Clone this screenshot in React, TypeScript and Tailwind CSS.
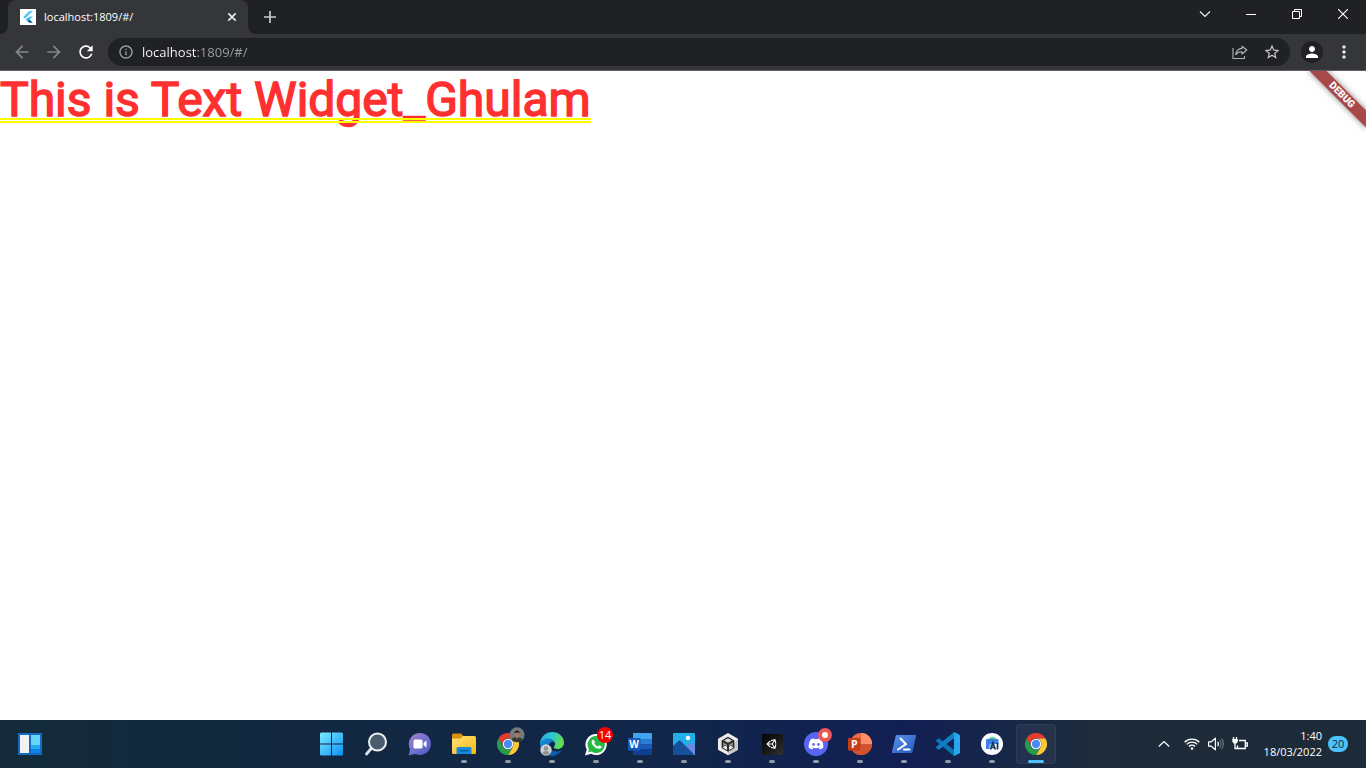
import React, { useState } from "react";
import {
  MdArrowBack,
  MdArrowForward,
  MdInfoOutline,
  MdMoreVert,
  MdPerson,
  MdRefresh,
  MdStarBorder,
} from "react-icons/md";
import { FaDiscord, FaUnity } from "react-icons/fa";

const uiFont = "font-['Segoe_UI','Open_Sans','Noto_Sans',sans-serif]";

function FlutterIcon() {
  return (
    <svg viewBox="0 0 16 16" className="size-4 shrink-0" aria-hidden="true">
      <rect width="16" height="16" fill="#fff" />
      <path d="M9.2 2h3.6L5 9.7 3.2 7.9z" fill="#54c5f8" />
      <path d="M9.2 7.6h3.6L9.6 10.8 7.8 9z" fill="#54c5f8" />
      <path d="M6.2 10.7 8 8.9l4.8 4.9H9.2z" fill="#01579b" />
      <path d="M6.2 10.7 8 8.9l1.8 1.8L8 12.5z" fill="#29b6f6" />
    </svg>
  );
}

function TabStrip() {
  const caption =
    "flex h-7 w-[46px] items-center justify-center text-white hover:bg-white/10";
  return (
    <header className="flex h-[34px] shrink-0 items-start bg-[#202124] pl-2">
      <div className="relative flex h-[34px] w-60 items-center rounded-t-lg bg-[#35363a] pr-2 pl-3">
        <svg viewBox="0 0 8 8" className="absolute bottom-0 -left-2 size-2" aria-hidden="true">
          <path d="M8 0v8H0a8 8 0 0 0 8-8z" fill="#35363a" />
        </svg>
        <svg viewBox="0 0 8 8" className="absolute -right-2 bottom-0 size-2" aria-hidden="true">
          <path d="M0 0v8h8a8 8 0 0 1-8-8z" fill="#35363a" />
        </svg>
        <FlutterIcon />
        <span className="ml-2 flex-1 text-[11px] leading-4 text-white">localhost:1809/#/</span>
        <button type="button" aria-label="Close tab" className="flex size-4 items-center justify-center">
          <svg viewBox="0 0 16 16" className="size-4">
            <path d="m4.3 4.3 7.4 7.4m0-7.4-7.4 7.4" stroke="#e8eaed" strokeWidth="1.7" />
          </svg>
        </button>
      </div>
      <button type="button" aria-label="New tab" className="ml-2 flex h-[34px] w-7 items-center justify-center">
        <svg viewBox="0 0 12 12" className="size-3">
          <path d="M6 0v12M0 6h12" stroke="#c8cacd" strokeWidth="1.7" />
        </svg>
      </button>
      <div className="ml-auto flex">
        <button type="button" aria-label="Search tabs" className={caption}>
          <svg viewBox="0 0 12 12" className="size-3">
            <path d="m1 3.5 5 5 5-5" fill="none" stroke="#f1f3f4" strokeWidth="1.1" />
          </svg>
        </button>
        <button type="button" aria-label="Minimize" className={caption}>
          <svg viewBox="0 0 10 10" className="size-[10px]">
            <path d="M0 5.5h10" stroke="currentColor" />
          </svg>
        </button>
        <button type="button" aria-label="Restore" className={caption}>
          <svg viewBox="0 0 10 10" className="size-[10px]">
            <path d="M.5 2.5h7v7h-7zM2.5 2.5v-2h7v7h-2" fill="none" stroke="currentColor" />
          </svg>
        </button>
        <button type="button" aria-label="Close" className={caption}>
          <svg viewBox="0 0 10 10" className="size-[10px]">
            <path d="m0 0 10 10M10 0 0 10" stroke="currentColor" strokeWidth="1.1" />
          </svg>
        </button>
      </div>
    </header>
  );
}

function Toolbar() {
  const [url, setUrl] = useState("localhost:1809/#/");
  const button = "flex size-7 shrink-0 items-center justify-center";
  return (
    <nav className="flex shrink-0 items-center gap-1 border-b border-[#5f5f63] bg-[#35363a] px-2 py-1">
      <button type="button" aria-label="Back" className={button}>
        <MdArrowBack className="size-5 text-[#85868a]" />
      </button>
      <button type="button" aria-label="Forward" className={button}>
        <MdArrowForward className="size-5 text-[#85868a]" />
      </button>
      <button type="button" aria-label="Reload" className={button}>
        <MdRefresh className="size-5 text-white" />
      </button>
      <div className="mx-1 flex h-7 flex-1 items-center rounded-full bg-[#202124] pr-1 pl-[10px]">
        <MdInfoOutline className="size-4 shrink-0 text-[#9aa0a6]" />
        <input
          aria-label="Address and search bar"
          value={url}
          onChange={(e) => setUrl(e.target.value)}
          className="ml-2 h-5 min-w-0 flex-1 bg-[linear-gradient(to_right,#ffffff_55px,#9aa0a6_55px)] bg-clip-text text-[13px] leading-5 text-transparent caret-white outline-none"
        />
        <button type="button" aria-label="Share" className={button}>
          <svg viewBox="0 0 16 16" className="size-4" fill="none" stroke="#b0b3b8" strokeWidth="1.1">
            <path d="M1 4v10.5h11.5V12" />
            <path d="M10 2.2 14.8 6 10 10V7.8C7.400 7.700 5.400 8.500 3.800 10.600 4.300 7 6.300 4.700 10 4.400z" strokeLinejoin="round" />
          </svg>
        </button>
        <button type="button" aria-label="Bookmark this tab" className="ml-1 flex size-7 items-center justify-center">
          <MdStarBorder className="size-[18px] text-[#c6c8cb]" />
        </button>
      </div>
      <button type="button" aria-label="Profile" className={button}>
        <span className="flex size-[22px] items-center justify-center rounded-full bg-[#202124]">
          <MdPerson className="size-[18px] text-white" />
        </span>
      </button>
      <button type="button" aria-label="Menu" className={button}>
        <MdMoreVert className="size-5 text-[#e8eaed]" />
      </button>
    </nav>
  );
}

function StartIcon() {
  return (
    <svg viewBox="0 0 24 24" className="size-6">
      <defs>
        <linearGradient id="start" x1="0" y1="0" x2="1" y2="1" gradientUnits="objectBoundingBox">
          <stop offset="0" stopColor="#7cecff" />
          <stop offset="1" stopColor="#0a8ff5" />
        </linearGradient>
      </defs>
      <path d="M0 1.500 1 .5h10v11H0zM12 .5h10l1 1v10H12zM0 12.500h11v11H1l-1-1zM12 12.500h11v10l-1 1H12z" fill="url(#start)" />
    </svg>
  );
}

function SearchIcon() {
  return (
    <svg viewBox="0 0 24 24" className="size-6">
      <path d="m2.500 22 6-7" stroke="#dfe3e8" strokeWidth="2.800" strokeLinecap="round" />
      <circle cx="13.500" cy="10" r="8.500" fill="#4a5b6e" stroke="#eceff2" strokeWidth="2" />
    </svg>
  );
}

function ChatIcon() {
  return (
    <svg viewBox="0 0 24 24" className="size-6">
      <defs>
        <linearGradient id="chat" x1="0" y1="0" x2="1" y2="1">
          <stop offset="0" stopColor="#a57cc0" />
          <stop offset=".5" stopColor="#7273cf" />
          <stop offset="1" stopColor="#4b53c4" />
        </linearGradient>
      </defs>
      <path d="M12 1a11 11 0 1 1-4.600 21L.8 23.200l1.300-6A11 11 0 0 1 12 1z" fill="url(#chat)" />
      <rect x="5.500" y="7.500" width="9" height="9" rx="1.500" fill="#fff" />
      <path d="m15.500 11 3-2.600v7.200l-3-2.600z" fill="#fff" />
    </svg>
  );
}

function FolderIcon() {
  return (
    <svg viewBox="0 0 24 24" className="size-6">
      <defs>
        <linearGradient id="folder" x1="0" y1="0" x2="1" y2="1">
          <stop offset="0" stopColor="#ffe17a" />
          <stop offset="1" stopColor="#f9b913" />
        </linearGradient>
      </defs>
      <path d="M0 3a1.500 1.500 0 0 1 1.500-1.500H9L11.500 4H18v5H0z" fill="#d99208" />
      <path d="M0 6.500h8.500L11 4h11.500A1.500 1.500 0 0 1 24 5.500v15a1.500 1.500 0 0 1-1.500 1.500h-21A1.500 1.500 0 0 1 0 20.500z" fill="url(#folder)" />
      <path d="M4.500 22v-5.500A1.500 1.500 0 0 1 6 15h12a1.500 1.500 0 0 1 1.500 1.500V22z" fill="#168adb" />
      <path d="M8 18.700h8" stroke="#075fa8" strokeWidth="1.400" strokeLinecap="round" />
    </svg>
  );
}

function ChromeIcon({ profile = false }: { profile?: boolean }) {
  return (
    <svg viewBox="0 0 24 24" className="size-6 overflow-visible">
      <path d="M2.470 6.500A11 11 0 0 1 21.530 6.500H12a5.500 5.500 0 0 0-4.760 8.250z" fill="#e33b2e" />
      <path d="M21.530 6.500A11 11 0 0 1 12 23l4.760-8.250A5.500 5.500 0 0 0 12 6.500z" fill="#fcc934" />
      <path d="M12 23A11 11 0 0 1 2.470 6.500l4.770 8.250a5.500 5.500 0 0 0 9.520 0z" fill="#269b4b" />
      <circle cx="12" cy="12" r="5.300" fill="#fff" />
      <circle cx="12" cy="12" r="4.200" fill="#4a8af4" />
      {profile && (
        <g>
          <circle cx="21" cy="2.800" r="7.500" fill="#747a7b" />
          <path d="M15.500 7.800c1-2 2.500-2.600 5.500-2.600s4.800.8 5.600 2.600a7.500 7.500 0 0 1-11.100 0z" fill="#343a2c" />
          <ellipse cx="21" cy="2.300" rx="2.300" ry="3" fill="#a67861" />
          <path d="M18.500 1.800c-.3-4.400 5.300-4.400 5 0-.7-1.800-4.300-1.800-5 0z" fill="#19191b" />
          <path d="m20 5 1 2 1-2z" fill="#b98972" />
        </g>
      )}
    </svg>
  );
}

function EdgeIcon() {
  return (
    <svg viewBox="0 0 24 24" className="size-6">
      <defs>
        <linearGradient id="edge-top" x1="0" y1="0" x2="1" y2=".3">
          <stop offset="0" stopColor="#2aa9e8" />
          <stop offset=".5" stopColor="#2cc5d6" />
          <stop offset="1" stopColor="#63dc50" />
        </linearGradient>
        <linearGradient id="edge-base" x1="0" y1="0" x2="1" y2="1">
          <stop offset="0" stopColor="#1595df" />
          <stop offset="1" stopColor="#0b4da2" />
        </linearGradient>
      </defs>
      <path d="M0 12C0 7 4 4.500 9 5c4 .4 6 3 6 5.500-3-2-6 0-6 3.500 0 4 5 7 12.500 4.500-3.500 5.500-9 6.500-13 4.700A12 12 0 0 1 0 12z" fill="url(#edge-base)" />
      <path d="M0 11.500C.5 4.500 6 0 12 0c7 0 12 5 12 10.500 0 4-3 6.500-6.500 6.500-3 0-4.300-1-3.300-2.400C17 10.500 13 6.500 8.500 6.500 4.500 6.500 1 8.500 0 11.500z" fill="url(#edge-top)" />
      <circle cx="6" cy="18" r="5.700" fill="#d0d0d1" />
      <circle cx="6" cy="16.500" r="2.200" fill="#8f9092" />
      <path d="M2.500 21.500c.4-3.300 6.600-3.300 7 0a5.700 5.700 0 0 1-7 0z" fill="#8f9092" />
    </svg>
  );
}

function WhatsAppIcon() {
  return (
    <span className="relative flex size-6 items-center justify-center">
      <svg viewBox="0 0 24 24" className="size-6">
        <path d="M12.200 2a10.500 10.500 0 1 1-5 19.700L1 23.500l1.700-6A10.500 10.500 0 0 1 12.200 2z" fill="#fff" />
        <path d="M12.200 4.100a8.500 8.500 0 1 1-4.700 15.500l-3.400 1 .9-3.400a8.500 8.500 0 0 1 7.200-13.100z" fill="#25b943" />
        <path d="M9.800 8.200c-.5-.8-1.200-.6-1.700 0-2.200 2.800 3.100 9 7.200 8.600 1.500-.2 2.500-1.300 2.200-2.300l-2.300-1.200-1.300 1.300c-1.700-.6-2.900-1.800-3.700-3.400l.9-1.200z" fill="#fff" />
      </svg>
      <span className="absolute -top-[5px] -right-[5px] flex size-4 items-center justify-center rounded-full bg-[#f60000] text-[11px] leading-4 text-white">
        14
      </span>
    </span>
  );
}

function WordIcon() {
  return (
    <svg viewBox="0 0 24 24" className="size-6">
      <path d="M5 1h18a1 1 0 0 1 1 1v5H5z" fill="#41a5ee" />
      <path d="M5 7h19v5.500H5z" fill="#2b7cd3" />
      <path d="M5 12.500h19v5H5z" fill="#185abd" />
      <path d="M5 17.500h19V22a1 1 0 0 1-1 1H6a1 1 0 0 1-1-1z" fill="#103f91" />
      <rect y="6" width="12.500" height="12.500" rx="1" fill="#185abd" />
      <text x="6.200" y="15.800" textAnchor="middle" fontSize="10" fontWeight="700" fill="#fff">W</text>
    </svg>
  );
}

function PhotosIcon() {
  return (
    <svg viewBox="0 0 24 24" className="size-6">
      <rect x="1" y="1" width="22" height="22" rx="1" fill="#23aee9" />
      <path d="m12 16 5.500-5q1-.8 2 0L23 14v9H12z" fill="#6d8be3" />
      <path d="M1 14 6.300 9q1.200-1 2.400 0L22 22.200 21 23H2a1 1 0 0 1-1-1z" fill="#174f9b" />
      <circle cx="16" cy="6" r="2.200" fill="#fff" />
    </svg>
  );
}

function UnityHubIcon() {
  return (
    <svg viewBox="0 0 24 24" className="size-6">
      <path d="M12 1 22 6.800v10.900L12 23.300 2 17.700V6.800z" fill="#ececec" />
      <path d="m22 6.800v10.900L12 23.300v-4z" fill="#c9c9c9" />
      <path d="m12 4.800 6.400 3.600v7.700L12 19.800l-6.400-3.700V8.400z" fill="#2b2b2b" />
      <path d="m12 6.300 4 2.200-4 2.300-4-2.300z" fill="#d9d9d9" />
      <path d="m7.200 10.200 3.800 2.200v2l-1.800-1-2 1.200zM16.800 10.200 13 12.400v2l1.800-1 2 1.200z" fill="#8a8a8a" />
      <path d="m6.500 15.600 3-1.800 1.500 1v3.300zM17.500 15.600l-3-1.800-1.500 1v3.300z" fill="#f1f1f1" />
    </svg>
  );
}

function UnityIcon() {
  return (
    <span className="flex size-[21px] items-center justify-center bg-linear-to-br from-[#050505] to-[#303030]">
      <FaUnity className="size-3 text-white" />
    </span>
  );
}

function DiscordIcon() {
  return (
    <span className="relative flex size-6 items-center justify-center rounded-full bg-[#5865f2]">
      <FaDiscord className="size-4 text-white" />
      <span className="absolute -top-1 -right-1 size-[14px] rounded-full border-4 border-[#ee5656] bg-white" />
    </span>
  );
}

function PowerPointIcon() {
  return (
    <svg viewBox="0 0 24 24" className="size-6">
      <circle cx="13" cy="12" r="11" fill="#ed6c47" />
      <path d="M13 1a11 11 0 0 1 11 11H13z" fill="#ff8f6b" />
      <path d="M2 12h22a11 11 0 0 1-22 0z" fill="#d35230" />
      <rect y="6" width="12.500" height="12.500" rx="1" fill="#c43e1c" />
      <text x="6.300" y="16" textAnchor="middle" fontSize="10.500" fontWeight="700" fill="#fff">P</text>
    </svg>
  );
}

function PowerShellIcon() {
  return (
    <svg viewBox="0 0 24 24" className="size-6">
      <defs>
        <linearGradient id="shell" x1="0" y1="0" x2="1" y2="1">
          <stop offset="0" stopColor="#5c91eb" />
          <stop offset="1" stopColor="#2459be" />
        </linearGradient>
      </defs>
      <path d="M5.500 3H23a1 1 0 0 1 1 1.200l-3.600 16a1 1 0 0 1-1 .8H1a1 1 0 0 1-1-1.200l3.600-15.500A2 2 0 0 1 5.500 3z" fill="url(#shell)" />
      <path d="m8.500 6.500 5.500 5.700-8 5.300M12 17.500h5.500" stroke="#fff" strokeWidth="2" strokeLinecap="round" strokeLinejoin="round" fill="none" />
    </svg>
  );
}

function CodeIcon() {
  return (
    <svg viewBox="0 0 24 24" className="size-6">
      <path d="M.3 8.200 2 6.500q.6-.4 1.200 0L18 17.800V24L.3 9.300q-.5-.6 0-1.100z" fill="#0877b9" />
      <path d="M18 0v6.200L3.200 17.500q-.6.400-1.200 0L.3 15.900q-.5-.6 0-1.100z" fill="#127fc5" />
      <path d="m18 0 5.300 2.400.7 1v17.200l-.7 1L18 24z" fill="#2ba5ee" />
    </svg>
  );
}

function AndroidStudioIcon() {
  return (
    <svg viewBox="0 0 24 24" className="size-6">
      <circle cx="12" cy="12" r="11" fill="#fafcff" />
      <path d="M8 7.500a5 4.500 0 0 1 9 0z" fill="#35d581" />
      <path d="M6 8q0-1 1-1h10.500q1 0 1 1v4H11l-2 5H6z" fill="#3c7ee5" />
      <path d="m9 12.500 2 0-1.500 5z" fill="#83bdf5" />
      <path d="m10.500 17.500 2.400-6.700 2.400 6.700M11.500 15.500h3M17.500 10.800v6.700" stroke="#12345b" strokeWidth="1.700" fill="none" />
    </svg>
  );
}

type TaskApp = { name: string; icon: React.ReactNode; running?: boolean; active?: boolean };

const apps: TaskApp[] = [
  { name: "Start", icon: <StartIcon /> },
  { name: "Search", icon: <SearchIcon /> },
  { name: "Chat", icon: <ChatIcon /> },
  { name: "File Explorer", icon: <FolderIcon />, running: true },
  { name: "Chrome profile", icon: <ChromeIcon profile />, running: true },
  { name: "Edge", icon: <EdgeIcon />, running: true },
  { name: "WhatsApp", icon: <WhatsAppIcon />, running: true },
  { name: "Word", icon: <WordIcon />, running: true },
  { name: "Photos", icon: <PhotosIcon />, running: true },
  { name: "Unity Hub", icon: <UnityHubIcon />, running: true },
  { name: "Unity", icon: <UnityIcon />, running: true },
  { name: "Discord", icon: <DiscordIcon />, running: true },
  { name: "PowerPoint", icon: <PowerPointIcon />, running: true },
  { name: "PowerShell", icon: <PowerShellIcon />, running: true },
  { name: "Visual Studio Code", icon: <CodeIcon />, running: true },
  { name: "Android Studio", icon: <AndroidStudioIcon />, running: true },
  { name: "Chrome", icon: <ChromeIcon />, active: true },
];

function TaskButton({ app }: { app: TaskApp }) {
  return (
    <button
      type="button"
      aria-label={app.name}
      className={
        app.active
          ? "relative flex size-10 items-center justify-center rounded-sm border border-white/5 bg-white/5"
          : "relative flex size-10 items-center justify-center rounded-sm"
      }
    >
      {app.icon}
      {app.running && (
        <span className="absolute inset-x-0 bottom-px mx-auto h-[3px] w-[6px] rounded-full bg-[#9299a8]" />
      )}
      {app.active && (
        <span className="absolute inset-x-0 bottom-0 mx-auto h-[3px] w-4 rounded-full bg-[#4cc2ff]" />
      )}
    </button>
  );
}

function SystemTray() {
  return (
    <div className="flex items-center justify-end pr-[18px] text-white">
      <button type="button" aria-label="Show hidden icons" className="flex h-10 w-6 items-center justify-center">
        <svg viewBox="0 0 12 12" className="size-3">
          <path d="m.8 8.500 5.200-5 5.200 5" fill="none" stroke="currentColor" strokeWidth="1.200" />
        </svg>
      </button>
      <button type="button" aria-label="Network, volume and battery" className="ml-2 flex h-10 items-center gap-2">
        <svg viewBox="0 0 16 16" className="size-4" fill="none" stroke="currentColor" strokeWidth="1.300">
          <path d="M.6 6.200a10.500 10.500 0 0 1 14.800 0M2.700 8.400a7.500 7.500 0 0 1 10.600 0M4.900 10.500a4.400 4.400 0 0 1 6.200 0" />
          <circle cx="8" cy="12.500" r="1.300" fill="currentColor" stroke="none" />
        </svg>
        <svg viewBox="0 0 16 16" className="size-4" fill="none" stroke="currentColor" strokeWidth="1.200">
          <path d="M.6 5.800h2.700L7.400 2.200v11.600L3.300 10.200H.6z" strokeLinejoin="round" />
          <path d="M9.500 5.800a3.500 3.500 0 0 1 0 4.400" />
          <path d="M11.500 4.200a6 6 0 0 1 0 7.600M13.500 2.600a8.600 8.600 0 0 1 0 10.800" stroke="#68727e" />
        </svg>
        <svg viewBox="0 0 16 16" className="size-4" fill="none" stroke="currentColor" strokeWidth="1.300">
          <path d="M7 4.500h6.300v8H5.500V9.500M13.500 7h1.800v3h-1.800M3 7v5.500h2.500" />
          <path d="M1.500 1v2.500M4.500 1v2.500" />
          <path d="M.3 3h5.500v2.500L4.500 7.500h-3L.3 5.500z" fill="currentColor" stroke="none" />
        </svg>
      </button>
      <button type="button" aria-label="Date, time and notifications" className="ml-4 flex items-center gap-[6px]">
        <span className="text-right text-[11px] leading-4">
          1:40
          <br />
          18/03/2022
        </span>
        <span className="flex h-4 w-5 items-center justify-center rounded-full bg-[#4cc2ff] text-[11px] leading-4 text-[#102838]">
          20
        </span>
      </button>
    </div>
  );
}

function Taskbar() {
  return (
    <footer className="grid h-12 shrink-0 grid-cols-[1fr_auto_1fr] items-center bg-[linear-gradient(to_right,#142b3a,#12283f_20%,#11264a_50%,#121f54_66%,#172747_74%,#1d2b3a_80%,#1d2b38)] pl-0.5">
      <div className="flex items-center pl-2">
        <button type="button" aria-label="Widgets" className="flex size-10 items-center justify-center">
          <svg viewBox="0 0 24 24" className="size-6">
            <path d="M0 1h24v22H0z" fill="#126bc4" />
            <path d="M2 3h9v18H2z" fill="#f2f2f3" />
            <path d="M13 3h9v10h-9z" fill="#69d5fb" />
            <path d="M13 13h9v4h-9z" fill="#25a7f2" />
            <path d="M13 17h9v4h-9z" fill="#0c83e4" />
          </svg>
        </button>
      </div>
      <div className="flex gap-1">
        {apps.map((app) => (
          <TaskButton key={app.name} app={app} />
        ))}
      </div>
      <SystemTray />
    </footer>
  );
}

export default function App() {
  return (
    <div className={`flex h-screen flex-col overflow-hidden bg-white ${uiFont}`}>
      <TabStrip />
      <Toolbar />
      <main className="relative flex-1 overflow-hidden bg-white">
        <h1 className="relative inline-block font-[Roboto,sans-serif] text-[48px] leading-[58px] font-normal whitespace-nowrap text-[#ff3030] [-webkit-text-stroke:1.5px_#ff3030] after:absolute after:inset-x-0 after:top-[47px] after:h-[5px] after:border-y-2 after:border-[#ffff00]">
          This is Text Widget_Ghulam
        </h1>
        <div className="absolute top-[18px] -right-4 flex h-3 w-20 rotate-45 items-center justify-center bg-[#a94848] font-[Roboto,sans-serif] text-[10px] leading-3 font-black text-white shadow-[0_0_6px_rgba(0,0,0,0.5)]">
          DEBUG
        </div>
      </main>
      <Taskbar />
    </div>
  );
}
